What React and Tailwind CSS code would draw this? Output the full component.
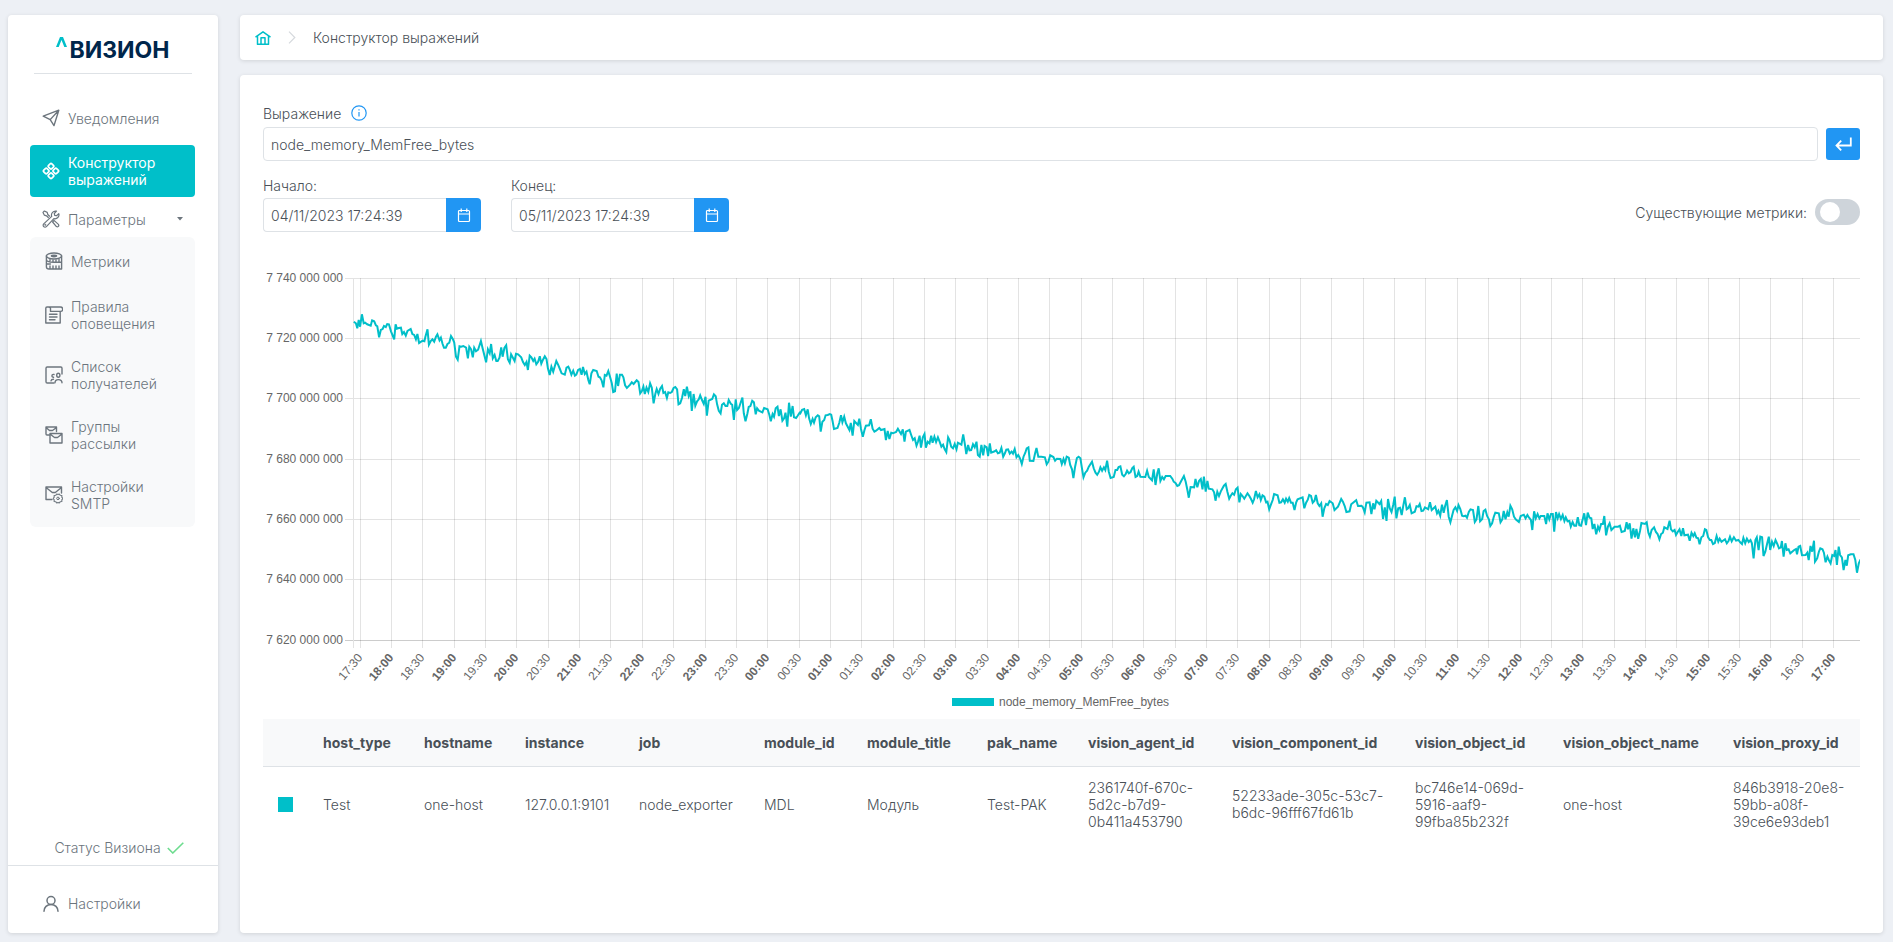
import React, { useEffect, useRef, useState } from 'react';

const MENU_ICON = {
  width: 18,
  height: 18,
  viewBox: '0 0 18 18',
  fill: 'none',
  stroke: 'currentColor',
  strokeWidth: 1.4,
  strokeLinecap: 'round',
  strokeLinejoin: 'round',
  className: 'shrink-0',
  'aria-hidden': true
};

const SendIcon = () => (
  <svg {...MENU_ICON}>
    <path d="M1.2 7.2 16.8 1.2 12 16.6 8.2 10.6zM8.2 10.6 16.8 1.2M1.2 7.2l7 3.4" />
  </svg>
);

const BuilderIcon = () => (
  <svg {...MENU_ICON} strokeWidth={1.7}>
    <rect x="-2.3" y="-2.3" width="4.6" height="4.6" rx="1.2" transform="translate(9 4.2) rotate(45)" />
    <rect x="-2.3" y="-2.3" width="4.6" height="4.6" rx="1.2" transform="translate(13.8 9) rotate(45)" />
    <rect x="-2.3" y="-2.3" width="4.6" height="4.6" rx="1.2" transform="translate(9 13.8) rotate(45)" />
    <rect x="-2.3" y="-2.3" width="4.6" height="4.6" rx="1.2" transform="translate(4.2 9) rotate(45)" />
  </svg>
);

const ToolsIcon = () => (
  <svg {...MENU_ICON} strokeWidth={1.2}>
    <path d="M7.6 6.2 5.8 4.5 5.2 2.4 2.4 1 1 2.4l1.4 2.8 2.1.6 1.8 1.7" />
    <path d="m10.600 12 1.400-1.600 4.400 4a1.500 1.500 0 0 1-2 2.200z" />
    <path d="M16.8 3.600 14.500 5.700l-1.800-.4-.4-1.800 2.200-2.300a4 4 0 0 0-4.800 5.200l-8 7.500a1.900 1.900 0 0 0 2.700 2.700l7.500-8a4 4 0 0 0 4.900-5z" />
    <circle cx="3.3" cy="14.800" r=".4" />
  </svg>
);

const MetricsIcon = () => (
  <svg {...MENU_ICON}>
    <ellipse cx="9" cy="4" rx="7.6" ry="3" />
    <ellipse cx="9" cy="4" rx="2.6" ry=".7" />
    <path d="M1.4 4v3.500c0 1.500 3.400 2.700 7.600 2.700h7.600V4M1.400 7.800v7c0 1.200 1 2.200 2.600 2.200h12.600v-7M5 7.400v1.400M8 8v2M11 8v2M14 7.200v2.600M5 14v2.800M8 14v2.800M11 14v2.800M14 14v2.800M1.400 12h4" />
  </svg>
);

const RulesIcon = () => (
  <svg {...MENU_ICON}>
    <path d="M5 1H2A1.200 1.200 0 0 0 .8 2.200V17h14.400V5.400M3.500 1h12a2.200 2.200 0 0 1 0 4.400h-10V2.600C5.500 1.600 4.500 1 3.500 1M4.500 8.300h7.500M4.500 11h7.500M4.500 13.700h5.500" />
  </svg>
);

const RecipientsIcon = () => (
  <svg {...MENU_ICON}>
    <path d="M9 17H2.200A1.200 1.200 0 0 1 1 15.800V2.200A1.200 1.200 0 0 1 2.200 1h13.600A1.200 1.200 0 0 1 17 2.200V8" />
    <ellipse cx="13.300" cy="9.200" rx="1.600" ry="2" />
    <path d="M10 16.800c0-2 1.200-3.200 3.300-3.200s3.700 1.200 3.700 3.200M9 8.500c-1.500-.4-2.200.5-2 1.600.1.800.8 1.300 1.600 1.100M6 14.800c.2-1 1-1.600 2.500-1.600" />
  </svg>
);

const GroupsIcon = () => (
  <svg {...MENU_ICON}>
    <path d="M4 9H2a1 1 0 0 1-1-1V1h10.500v4.500M1 1.500 4.500 4.500h3l4-3M5 7.500h12V17H5zM5 8l4.500 3.500h3L17 8" />
  </svg>
);

const SmtpIcon = () => (
  <svg {...MENU_ICON}>
    <path d="M7 13.500H1V1h15.500v6M1 1.500l6.300 5h3l6.200-5" />
    <path
      strokeWidth="1.100"
      d="m11.700 8 1.300.6 1.300-.6 1 1.300 1.600.2-.1 1.700 1 1.300-1 1.300.1 1.700-1.600.2-1 1.300-1.300-.6-1.300.6-1-1.300-1.600-.2.1-1.700-1-1.300 1-1.300-.1-1.700 1.600-.2z"
    />
    <circle cx="13" cy="12.400" r="1.300" strokeWidth="1" />
  </svg>
);

const UserIcon = () => (
  <svg {...MENU_ICON} strokeWidth={1.5}>
    <circle cx="9" cy="5.500" r="4" />
    <path d="M2 16.300c0-4 3-6.800 7-6.800s7 2.800 7 6.800" />
  </svg>
);

const HomeIcon = () => (
  <svg width="16" height="14" viewBox="0 0 16 14" fill="none" stroke="#00bfc9" strokeWidth="1.500" strokeLinejoin="round" aria-hidden="true">
    <path d="M.5 6.200 8 .8l7.500 5.400M2.500 5v8.300h11V5M6 13V6.800h4V13" />
  </svg>
);

const CalendarIcon = () => (
  <svg width="14" height="15" viewBox="0 0 14 15" fill="none" stroke="#fff" strokeWidth="1.200" aria-hidden="true">
    <rect x="1.500" y="2.500" width="11" height="11" rx="1" />
    <path d="M1.500 6h11M4.200.5v3.500M9.800.5v3.500" />
  </svg>
);

const SUBMENU = [
  { title: 'Метрики', icon: MetricsIcon },
  { title: 'Правила оповещения', icon: RulesIcon },
  { title: 'Список получателей', icon: RecipientsIcon },
  { title: 'Группы рассылки', icon: GroupsIcon },
  { title: 'Настройки SMTP', icon: SmtpIcon }
];

const Sidebar = () => (
  <aside className="flex w-[210px] shrink-0 flex-col rounded bg-white leading-[17px] text-[#6c757d] shadow-[0_1px_4px_rgba(0,0,0,0.12)]">
    <div className="mx-[26px] flex h-[59px] items-center justify-center border-b border-[#dee2e6] pt-3">
      <svg width="11" height="10" viewBox="0 0 11 10" className="mb-4" aria-hidden="true">
        <path d="M0 10 4 0h3l4 10H8.300L5.500 3 2.700 10z" fill="#00bfc9" />
      </svg>
      <span className="ml-0.5 text-[23px] font-bold text-[#00264b]">ВИЗИОН</span>
    </div>

    <nav className="mt-5 pr-[23px] pl-[22px]">
      <a href="#notifications" className="flex h-12 items-center gap-2 px-3">
        <SendIcon />
        Уведомления
      </a>
      <a href="#builder" className="mt-[3px] flex h-[52px] items-center gap-2 rounded bg-[#00bfc9] px-3 font-normal text-white">
        <BuilderIcon />
        Конструктор выражений
      </a>
      <button type="button" className="flex h-10 w-full items-center gap-2 px-3 pt-1 text-left">
        <ToolsIcon />
        Параметры
        <svg width="6" height="4" viewBox="0 0 6 4" className="ml-auto" aria-hidden="true">
          <path d="M0 0h6L3 3.500z" fill="currentColor" />
        </svg>
      </button>
      <div className="rounded-md bg-[#f8f9fa] pb-0.5">
        {SUBMENU.map(({ title, icon: Icon }, index) => (
          <a
            key={title}
            href={`#params-${index}`}
            className={`flex items-center gap-2 pl-[15px] pr-8 ${index === 0 ? 'h-12' : 'h-[60px]'}`}
          >
            <Icon />
            {title}
          </a>
        ))}
      </div>
    </nav>

    <div className="mt-auto flex h-9 items-center justify-center gap-1.5 border-b border-[#dee2e6] pl-3">
      Статус Визиона
      <svg width="17" height="12" viewBox="0 0 17 12" fill="none" stroke="#6ddc8f" strokeWidth="1.600" aria-hidden="true">
        <path d="m.8 6 5 5L16.300.8" />
      </svg>
    </div>
    <a href="#settings" className="mb-1 flex h-[63px] items-center gap-2 px-[34px] pt-3">
      <UserIcon />
      Настройки
    </a>
  </aside>
);

// Samples come in three chunks, each with its own origin and step
const SERIES = [
  {
    x: 250, y: 0, kx: 2.851, ky: 3,
    points: '296,185 302,190 306,205 310,180 314,200 319,163 324,190 328,188 334,193 344,197 348,181 354,184 359,196 363,199 368,232 373,210 378,207 382,198 387,201 391,192 396,193 402,214 411,238 415,193 419,206 424,204 430,203 434,222 439,216 444,227 449,213 458,207 463,222 468,225 473,238 477,222 482,249 492,242 497,244 500,230 506,208 510,254 515,243 520,238 525,245 530,230 534,223 540,241 544,233 549,252 553,263 558,263 563,252 568,248 573,228 578,237 582,247 587,290 592,299 597,259 602,260 608,258 616,263 621,295 625,260 630,268 635,292 639,263 644,274 650,269 658,243 663,265 673,307 678,268 683,280 687,252 692,295 697,285 702,303 706,303 711,293 716,262 720,290 725,264 730,256 735,298 740,308 744,283 754,303 758,281 764,283 773,292 778,306 783,315 788,306 792,330 797,287 802,292 807,303 811,296 816,313 821,305 826,289 830,311 835,299 840,289 845,297 849,325 854,345 859,320 864,335 873,303 878,314 883,327 888,340 897,344 902,323 907,320 911,329 916,344 921,332 926,347 930,344 935,330 940,327 945,344 949,321 954,342 959,335 964,360 968,373 973,340 978,330 988,333 993,350 997,352 1002,361 1007,382 1011,345 1016,347 1021,333 1026,350 1031,370 1035,396 1040,394 1045,341 1049,378 1054,344 1060,344 1064,352 1069,376 1074,384 1083,374 1088,367 1093,372 1102,361 1107,366 1112,400 1117,392 1121,380 1125,402 1130,383 1135,396 1140,370 1145,383 1150,430 1155,402 1159,387 1164,402 1169,386 1174,378 1178,399 1183,396 1188,414 1192,397 1197,399 1202,396 1207,384 1212,381 1217,388 1221,433 1226,430 1231,414 1236,388 1240,408 1245,380 1250,408 1255,394 1259,453 1264,402 1269,437 1274,424 1279,418 1283,406 1288,420 1293,432 1298,410 1302,467 1307,422 1317,417 1322,403 1327,409 1331,433 1336,452 1341,460 1345,434 1350,430 1355,438 1360,438 1364,420 1370,431 1374,434 1379,480 1384,418 1388,450 1393,444 1398,428 1403,413 1407,460 1412,484 1417,462 1421,441 1426,438 1431,422 1436,427 1441,463 1445,445 1450,452 1460,457 1465,444 1475,448 1480,465 1484,484 1489,462 1493,470 1498,445 1503,440 1507,468 1512,448 1517,482 1522,475 1526,458 1531,500 1536,428 1541,470 1546,438 1550,472 1556,474 1560,468 1566,458'
  },
  {
    x: 800, y: 90, kx: 2.851, ky: 3,
    points: '0,190 5,179 11,177 16,196 21,178 25,205 30,222 35,207 39,218 44,202 50,196 54,199 58,245 63,215 68,210 72,196 78,195 84,192 88,194 92,214 96,237 106,234 111,218 116,196 120,217 125,200 130,220 140,240 144,219 149,257 154,213 164,225 168,206 173,237 178,260 183,240 187,227 196,226 201,208 206,236 211,245 216,242 225,234 230,240 240,237 244,270 249,243 254,267 259,248 264,250 273,246 278,236 287,252 292,238 297,275 301,245 311,240 316,255 321,270 326,265 331,287 335,276 340,257 344,293 349,262 354,252 358,293 363,275 368,280 373,257 377,278 382,260 387,276 392,262 397,275 402,290 407,284 411,297 416,306 421,262 425,270 430,290 435,295 440,282 445,298 449,278 459,284 464,253 469,283 473,312 478,285 482,301 487,300 492,283 497,292 502,275 506,315 511,320 516,285 521,316 525,288 531,292 535,318 540,280 544,308 554,304 558,301 563,310 568,308 573,294 578,320 583,310 587,299 592,298 597,311 602,305 606,311 611,297 616,322 621,315 626,325 631,342 636,320 641,308 645,295 650,292 654,332 664,333 669,310 673,294 678,320 687,320 697,322 702,343 707,335 712,316 721,321 726,332 731,326 741,327 745,342 750,327 754,340 759,320 765,323 769,345 774,358 778,384 783,350 788,324 793,320 798,325 802,352 807,382 812,368 817,362 822,350 831,335 836,355 841,368 846,374 851,365 855,352 860,362 865,352 869,360 874,332 879,365 884,384 893,381 898,360 903,360 907,351 912,349 917,374 922,379 927,372 931,362 936,370 941,366 946,354 950,350 955,381 960,378 964,365 969,380 983,381 988,362 993,381 1002,391 1007,358 1012,405 1017,370 1021,355 1026,393 1031,381 1036,388 1041,378 1054,378 1060,386 1064,395 1069,399 1074,408 1079,406 1084,395 1093,378 1098,395 1103,420 1107,443 1112,411 1122,412 1126,387 1131,412 1136,393 1141,387 1146,418 1150,380 1155,425 1160,393 1164,416 1174,418 1179,427 1183,452 1188,425 1193,438 1198,424 1207,407 1212,402 1217,425 1222,446 1226,438 1231,430 1236,434 1241,418 1246,413 1251,457 1255,432 1260,438 1265,446 1274,430 1279,437 1284,447 1289,458 1293,448 1298,423 1303,442 1308,433 1312,450 1317,436 1322,440 1327,457 1331,455 1336,478 1341,463 1346,450 1350,432 1360,436 1365,458 1370,457 1375,448 1380,458 1384,446 1389,455 1393,444 1398,458 1403,458 1408,480 1413,457 1417,448 1431,442 1436,475 1441,458 1446,449 1450,435 1455,438 1460,458 1465,452 1469,435 1474,460 1479,468 1484,460 1488,500 1493,475 1498,462 1503,465 1508,453 1517,460 1522,480 1532,470 1536,460 1541,447 1546,455 1551,468 1556,486 1565,484'
  },
  {
    x: 1340, y: 190, kx: 2.835, ky: 3,
    points: '30,163 44,151 49,168 59,167 63,172 68,187 73,158 82,157 87,192 92,160 96,178 101,152 110,162 115,153 120,207 125,172 130,213 134,147 139,175 144,186 149,165 153,140 158,205 163,175 168,173 173,195 177,170 182,142 187,178 191,175 196,165 201,190 210,185 215,169 220,170 224,162 229,183 234,182 239,172 248,178 253,157 258,180 268,170 273,190 277,182 282,197 287,164 292,188 296,168 301,150 306,200 311,217 316,196 320,180 325,172 330,183 334,165 339,177 344,197 348,199 354,197 358,203 363,186 368,178 375,180 380,216 385,208 390,168 395,214 401,207 405,183 410,179 415,198 420,208 424,228 429,220 434,200 438,188 448,190 453,217 458,208 462,183 467,208 472,187 476,200 481,167 486,178 491,200 496,208 505,216 510,198 519,194 524,205 529,195 534,203 539,210 543,240 548,184 553,205 558,192 563,205 567,198 577,198 582,222 586,190 591,208 596,192 601,192 605,245 610,186 615,205 619,192 624,207 629,195 634,213 638,202 643,214 648,213 652,230 657,216 662,227 667,227 672,202 676,226 681,227 686,207 690,190 695,225 700,188 705,203 710,205 714,237 719,222 724,253 729,230 733,240 738,222 743,222 747,198 752,256 757,230 762,220 767,240 776,230 786,230 791,227 796,246 805,243 810,217 814,238 819,220 824,266 829,235 834,262 838,237 843,266 848,243 852,219 862,222 867,217 872,248 876,260 881,240 888,232 893,246 898,252 903,268 908,252 913,248 917,232 926,237 932,212 936,238 941,244 946,240 950,255 955,246 960,238 965,258 970,235 974,256 984,254 989,272 994,248 999,258 1003,250 1008,263 1013,265 1017,283 1022,262 1027,258 1032,238 1036,240 1041,262 1046,270 1050,270 1055,282 1060,279 1065,258 1070,275 1074,266 1079,275 1089,268 1094,280 1099,272 1103,260 1108,274 1114,262 1120,272 1127,270 1132,277 1137,282 1141,264 1146,280 1151,266 1156,276 1161,270 1165,280 1170,325 1175,270 1179,262 1184,300 1189,260 1194,262 1198,318 1203,305 1208,283 1213,260 1217,300 1222,275 1227,288 1232,270 1237,282 1242,295 1247,292 1250,273 1255,320 1260,280 1264,300 1269,298 1274,310 1285,300 1290,297 1293,313 1297,290 1302,288 1307,316 1317,315 1322,308 1326,330 1331,288 1336,305 1341,272 1344,335 1350,325 1355,305 1359,295 1365,298 1369,308 1374,337 1379,320 1383,330 1388,340 1393,315 1398,318 1402,300 1406,345 1411,290 1415,315 1420,322 1425,360 1430,330 1434,347 1438,316 1445,313 1453,313 1458,330 1463,368 1468,340 1473,328'
  }
];

// [share of the time range, y]
const SAMPLES = SERIES.flatMap((chunk) =>
  chunk.points.split(' ').map((pair) => {
    const [x, y] = pair.split(',').map(Number);
    return [(chunk.x + x / chunk.kx - 353.5) / 1506, chunk.y + y / chunk.ky];
  })
);

const Y_LABELS = [7740, 7720, 7700, 7680, 7660, 7640, 7620];
const PLOT_LEFT = 90;
const PLOT_TOP = 18;
const PLOT_BOTTOM = 380;

const timeLabel = (index) => {
  const minutes = (17 * 60 + 30 + index * 30) % 1440;
  const hh = String(Math.floor(minutes / 60)).padStart(2, '0');
  const mm = String(minutes % 60).padStart(2, '0');
  return `${hh}:${mm}`;
};

const Chart = () => {
  const boxRef = useRef(null);
  const [width, setWidth] = useState(1597);

  useEffect(() => {
    const observer = new ResizeObserver(([entry]) => setWidth(Math.round(entry.contentRect.width)));
    observer.observe(boxRef.current);
    return () => observer.disconnect();
  }, []);

  const plotWidth = width - PLOT_LEFT;
  const line = SAMPLES.map(([t, y]) => `${(PLOT_LEFT + 0.5 + t * plotWidth).toFixed(1)},${y.toFixed(1)}`).join(' ');
  const legendX = Math.floor(width / 2) - 109;

  return (
    <div ref={boxRef} className="mt-7 h-[459px] w-full">
      <svg width={width} height="459" className="block font-['Liberation_Sans',sans-serif] text-xs font-normal" role="img" aria-label="node_memory_MemFree_bytes">
        {Y_LABELS.map((label, i) => {
          const y = Math.floor(PLOT_TOP + ((PLOT_BOTTOM - PLOT_TOP) * i) / 6);
          return (
            <g key={label}>
              <rect x={PLOT_LEFT - 8} y={y} width={plotWidth + 8} height="1" fill={i === 6 ? '#cccccc' : '#e3e3e3'} />
              <text x={PLOT_LEFT - 10} y={y + 4} textAnchor="end" fill="#666">
                {`7 ${label - 7000} 000 000`}
              </text>
            </g>
          );
        })}
        <rect x={PLOT_LEFT} y={PLOT_TOP} width="1" height={PLOT_BOTTOM - PLOT_TOP + 8} fill="#e3e3e3" />
        {Array.from({ length: 48 }, (_, i) => {
          const x = Math.floor(PLOT_LEFT + plotWidth * (0.0048 + i * 0.0208));
          return (
            <g key={i}>
              <rect x={x} y={PLOT_TOP} width="1" height={PLOT_BOTTOM - PLOT_TOP + 8} fill="#000" fillOpacity="0.11" />
              <text
                transform={`translate(${x + 3} ${PLOT_BOTTOM + 18}) rotate(-50)`}
                textAnchor="end"
                fill="#666"
                className={i % 2 ? 'font-bold' : 'font-normal'}
              >
                {timeLabel(i)}
              </text>
            </g>
          );
        })}
        <polyline points={line} fill="none" stroke="#00bfc9" strokeWidth="2" strokeLinejoin="miter" />
        <rect x={legendX} y="438" width="42" height="8" fill="#00bfc9" />
        <text x={legendX + 47} y="446" fill="#666">node_memory_MemFree_bytes</text>
      </svg>
    </div>
  );
};

const COLUMNS = [
  { name: 'host_type', value: 'Test', width: 'w-[101px]' },
  { name: 'hostname', value: 'one-host', width: 'w-[101px]' },
  { name: 'instance', value: '127.0.0.1:9101', width: 'w-[114px]' },
  { name: 'job', value: 'node_exporter', width: 'w-[125px]' },
  { name: 'module_id', value: 'MDL', width: 'w-[103px]' },
  { name: 'module_title', value: 'Модуль', width: 'w-[120px]' },
  { name: 'pak_name', value: 'Test-PAK', width: 'w-[101px]' },
  { name: 'vision_agent_id', value: '2361740f-670c-5d2c-b7d9-0b411a453790', width: 'w-[144px]' },
  { name: 'vision_component_id', value: '52233ade-305c-53c7-b6dc-96fff67fd61b', width: 'w-[183px]' },
  { name: 'vision_object_id', value: 'bc746e14-069d-5916-aaf9-99fba85b232f', width: 'w-[148px]' },
  { name: 'vision_object_name', value: 'one-host', width: 'w-[170px]' },
  { name: 'vision_proxy_id', value: '846b3918-20e8-59bb-a08f-39ce6e93deb1', width: '' }
];

const LabelsTable = () => (
  <table className="w-full table-fixed border-collapse text-left leading-[17px]">
    <colgroup>
      <col className="w-[45px]" />
      {COLUMNS.map((column) => (
        <col key={column.name} className={column.width} />
      ))}
    </colgroup>
    <thead>
      <tr className="h-[47px] border-b border-[#dee2e6] bg-[#f8f9fa]">
        <th aria-label="Цвет" />
        {COLUMNS.map((column) => (
          <th key={column.name} className="pl-[15px] font-bold whitespace-nowrap">
            {column.name}
          </th>
        ))}
      </tr>
    </thead>
    <tbody>
      <tr className="h-[76px]">
        <td className="pl-[15px]">
          <div className="size-[15px] bg-[#00bfc9]" />
        </td>
        {COLUMNS.map((column) => (
          <td key={column.name} className="pr-2 pl-[15px]">
            {column.value}
          </td>
        ))}
      </tr>
    </tbody>
  </table>
);

const DateField = ({ id, label, value, onChange }) => (
  <div>
    <label htmlFor={id} className="block leading-[18px]">
      {label}
    </label>
    <div className="mt-[3px] flex">
      <input
        id={id}
        type="text"
        value={value}
        onChange={(e) => onChange(e.target.value)}
        className="h-[34px] w-[183px] rounded-l border border-r-0 border-[#dee2e6] px-[7px] outline-none"
      />
      <button type="button" aria-label={label} className="flex h-[34px] w-[35px] items-center justify-center rounded-r bg-[#2196f3]">
        <CalendarIcon />
      </button>
    </div>
  </div>
);

const App = () => {
  const [expression, setExpression] = useState('node_memory_MemFree_bytes');
  const [start, setStart] = useState('04/11/2023 17:24:39');
  const [end, setEnd] = useState('05/11/2023 17:24:39');
  const [existing, setExisting] = useState(false);

  return (
    <div className="flex min-h-screen gap-[22px] bg-[#edf0f5] pt-[15px] pr-[10px] pb-[9px] pl-2 font-['Inter',sans-serif] text-[14px] font-light text-[#495057]">
      <Sidebar />
      <div className="flex min-w-0 flex-1 flex-col gap-[15px]">
        <header className="flex h-[45px] items-center rounded bg-white px-[15px] shadow-[0_1px_4px_rgba(0,0,0,0.12)]">
          <a href="#home" aria-label="Главная">
            <HomeIcon />
          </a>
          <svg width="8" height="13" viewBox="0 0 8 13" fill="none" stroke="#d5d9dd" strokeWidth="1.200" className="mx-[17px]" aria-hidden="true">
            <path d="m1 .7 5.800 5.800L1 12.300" />
          </svg>
          <span>Конструктор выражений</span>
        </header>

        <main className="flex-1 rounded bg-white px-[23px] pt-7 shadow-[0_1px_4px_rgba(0,0,0,0.12)]">
          <div className="flex h-5 items-center gap-[10px]">
            <label htmlFor="expression">Выражение</label>
            <svg width="16" height="16" viewBox="0 0 16 16" fill="none" stroke="#2196f3" strokeWidth="1.200" aria-hidden="true">
              <circle cx="8" cy="8" r="7.200" />
              <path d="M8 7v4.500M8 4.200v1.300" />
            </svg>
          </div>
          <div className="mt-1 flex items-center gap-2">
            <input
              id="expression"
              type="text"
              value={expression}
              onChange={(e) => setExpression(e.target.value)}
              className="h-[34px] min-w-0 flex-1 rounded border border-[#dee2e6] px-[7px] outline-none"
            />
            <button type="button" aria-label="Выполнить" className="flex h-8 w-[34px] items-center justify-center rounded-[3px] bg-[#2196f3]">
              <svg width="17" height="14" viewBox="0 0 17 14" fill="none" stroke="#fff" strokeWidth="1.800" aria-hidden="true">
                <path d="M15.800.5V8.500H1.500M6.200 3.700 1.500 8.500l4.700 4.800" />
              </svg>
            </button>
          </div>

          <div className="mt-4 flex items-end gap-[30px]">
            <DateField id="start" label="Начало:" value={start} onChange={setStart} />
            <DateField id="end" label="Конец:" value={end} onChange={setEnd} />
            <label className="mb-[7px] ml-auto flex cursor-pointer items-center gap-2">
              Существующие метрики:
              <input
                type="checkbox"
                role="switch"
                checked={existing}
                onChange={(e) => setExisting(e.target.checked)}
                className="h-[26px] w-[45px] appearance-none rounded-full bg-[#ced4da] px-[5px] py-[3px] before:block before:size-5 before:rounded-full before:bg-white checked:bg-[#2196f3] checked:before:ml-auto"
              />
            </label>
          </div>

          <Chart />
          <LabelsTable />
        </main>
      </div>
    </div>
  );
};

export default App;
